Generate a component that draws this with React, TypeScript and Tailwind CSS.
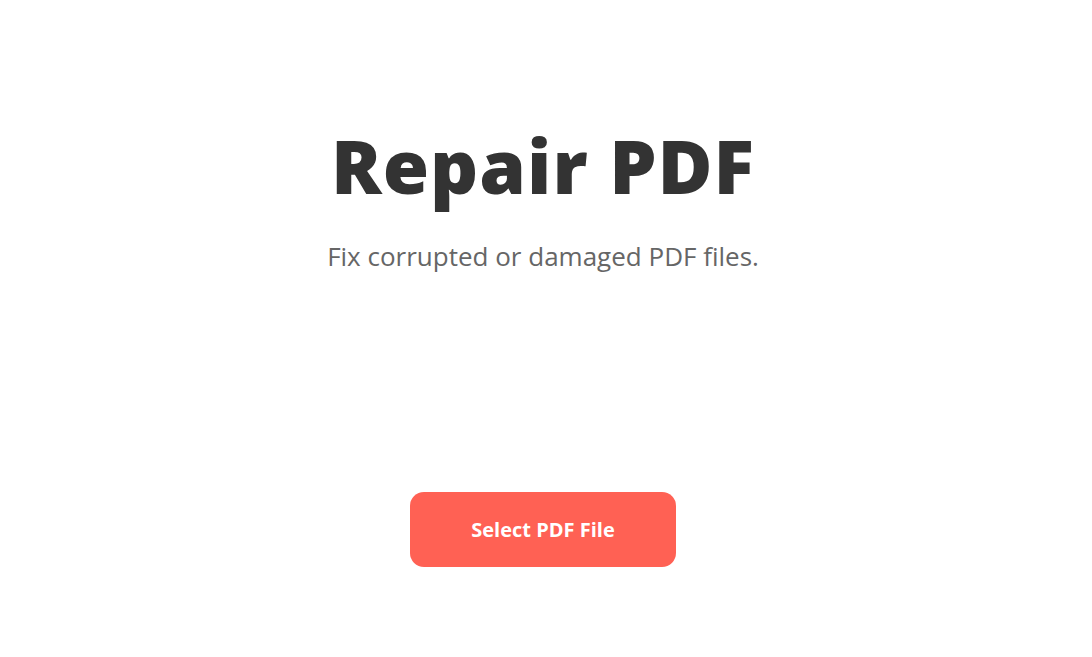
export default function App() {
  return (
    <div
      className="min-h-screen bg-white flex flex-col items-center pr-[6px]"
      style={{ fontFamily: '"Open Sans", "Noto Sans", "Liberation Sans", sans-serif' }}
    >
      <h1 className="mt-[120px] text-[75px] leading-[90px] font-extrabold text-[#333333] tracking-[1px]">
        Repair PDF
      </h1>
      <p className="mt-[29px] text-[26px] leading-[34px] text-[#666666]">
        Fix corrupted or damaged PDF files.
      </p>
      <button className="mt-[219px] w-[266px] h-[75px] rounded-[14px] bg-[#ff6154] text-white text-[20px] font-bold">
        Select PDF File
      </button>
    </div>
  );
}
